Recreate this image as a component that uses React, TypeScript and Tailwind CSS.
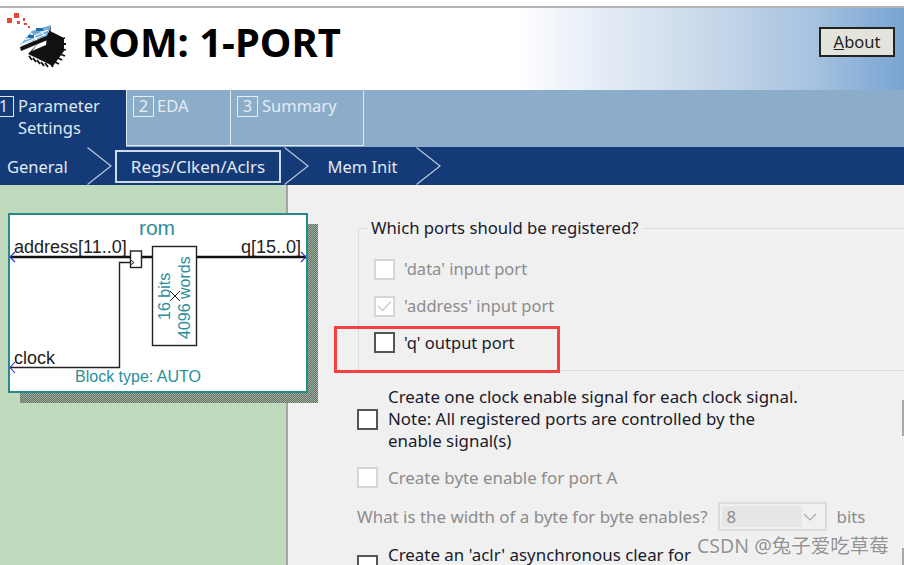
import React from 'react';

const Chevron: React.FC = () => (
  <svg width="25" height="38" viewBox="0 0 25 38" className="shrink-0">
    <path d="M0.5 0.5 L24 19 L0.5 37.5" fill="none" stroke="#b9c8dc" strokeWidth="1.2" />
  </svg>
);

const ChipLogo: React.FC = () => (
  <svg width="72" height="70" viewBox="0 0 72 70" className="shrink-0 -translate-y-[6px]">
    <g fill="#e8453c">
      <rect x="7" y="17" width="5" height="5" />
      <rect x="14" y="12" width="5" height="5" />
      <rect x="17" y="20" width="3" height="3" />
      <rect x="23" y="17" width="2" height="3" />
      <rect x="24" y="22" width="3" height="2" />
      <rect x="28" y="25" width="2" height="2" />
    </g>
    {/* chip body with pins */}
    <path d="M28 53 L50 30 L64 37 L64 50 L53 65 Z" fill="#111" />
    <path d="M29 55 L32 59 M33 57 L36 61 M37 59 L40 63 M41 61 L44 65 M45 62 L48 66 M50 62 L53 66 M55 61 L59 63 M58 57 L62 59 M60 53 L65 55 M62 48 L66 49 M62 43 L66 43 M61 38 L65 37" stroke="#111" strokeWidth="1.8" />
    {/* notch */}
    <path d="M32 50 L46 44 L47 35 L40 40 Z" fill="#fff" />
    {/* tilted panel */}
    <path d="M20 46 L48 34 L51 24 L50 38 L21 50 Z" fill="#111" />
    <path d="M20 44 L32 30 L51 24 L47 35 Z" fill="#6fa9d6" />
    <path d="M25 39 L48 29 M22 43 L46 33 M31 32 L37 39 M39 27 L44 34" stroke="#fff" strokeWidth="1.2" />
    <rect x="36" y="27" width="7" height="3" fill="#1d6fb0" />
    <rect x="28" y="34" width="6" height="3" fill="#1d6fb0" />
  </svg>
);

const Check: React.FC<{ disabled?: boolean; checked?: boolean }> = ({ disabled, checked }) => (
  <span
    className={`flex w-[21px] h-[21px] shrink-0 items-center justify-center border-2 ${
      disabled ? 'border-[#d6d6d6] bg-white' : 'border-[#555] bg-white'
    }`}
  >
    {checked && (
      <svg width="15" height="12" viewBox="0 0 15 12">
        <path d="M1 6 L5.5 10.5 L14 1.5" fill="none" stroke="#cfcfcf" strokeWidth="1.6" />
      </svg>
    )}
  </span>
);

const TEAL = '#2b8f9a';

const RomDiagram: React.FC = () => (
  <svg width="296" height="176" viewBox="10 215 296 176" className="block">
    <g fontFamily="'Liberation Sans', sans-serif">
      <text x="157" y="235" textAnchor="middle" fontSize="21" fill={TEAL}>rom</text>
      <text x="14" y="253" fontSize="18" fill="#222">address[11..0]</text>
      <text x="241" y="253" fontSize="18" fill="#222">q[15..0]</text>
      <text x="14" y="364" fontSize="18" fill="#222">clock</text>
      <text x="75" y="382" fontSize="16" fill={TEAL}>Block type: AUTO</text>
      <text transform="translate(170 320) rotate(-90)" fontSize="16" fill={TEAL}>16 bits</text>
      <text transform="translate(190 339) rotate(-90)" fontSize="16" fill={TEAL}>4096 words</text>
    </g>
    <path d="M10 257 H130 M141 257 H152 M196 257 H306" stroke="#111" strokeWidth="2.4" fill="none" />
    <path d="M10 367.5 H119.5 V262.5 H130" stroke="#222" strokeWidth="1.4" fill="none" />
    <rect x="130.5" y="251" width="11" height="16.5" fill="#fff" stroke="#222" strokeWidth="1.4" />
    <path d="M130.5 260 L134 262.5 L130.5 265" stroke="#222" fill="none" />
    <rect x="152.5" y="246.5" width="44" height="99" fill="none" stroke="#222" strokeWidth="1.4" />
    <path d="M170 291 L180 301 M180 291 L170 301" stroke="#222" strokeWidth="1" />
    <path d="M15 252 L10 257 L15 262 M15 362 L10 367.5 L15 373 M301 252 L306 257 L301 262" stroke="#2a2ad8" strokeWidth="1.1" fill="none" />
  </svg>
);

const App: React.FC = () => {
  return (
    <div className="relative w-[904px] h-[565px] overflow-hidden bg-white font-['Noto_Sans',sans-serif] text-[16.5px] text-[#1a1a2a]">
      <div className="h-[6px] bg-white" />

      {/* header */}
      <div className="flex items-center justify-between h-[84px] border-t-2 border-[#b4b4b4] bg-[linear-gradient(90deg,#ffffff_57%,#e6edf6_66%,#c9d9ea_78%,#a6c2e0_90%,#78a4d2_100%)] pr-[9px]">
        <div className="flex items-center -mt-[14px]">
          <ChipLogo />
          <span className="ml-[10px] text-[40px] font-bold text-black leading-none">ROM: 1-PORT</span>
        </div>
        <button className="mb-[14px] w-[76px] h-[30px] border-2 border-[#222] bg-[#e3e3dc] text-[16.5px] text-[#222] leading-none">
          <span className="underline">A</span>bout
        </button>
      </div>

      {/* wizard tabs */}
      <div className="flex h-[57px] bg-[#8badc9] text-[#e4ecf3]">
        <div className="flex w-[126px] bg-[#143a78] pt-[5px] text-[#dfe8f2]">
          <span className="flex -ml-[7px] mt-[1px] w-[21px] h-[21px] items-center justify-center border border-[#dfe8f2] leading-none">1</span>
          <span className="ml-[4px] leading-[22px]">Parameter<br />Settings</span>
        </div>
        <div className="flex w-[105px] h-[56px] border-x border-b border-[#dde7f0] pt-[5px] pl-[6px]">
          <span className="flex mt-[1px] w-[21px] h-[21px] items-center justify-center border border-[#e4ecf3] leading-none">2</span>
          <span className="ml-[3px] leading-[22px]">EDA</span>
        </div>
        <div className="flex w-[133px] h-[56px] border-r border-b border-[#dde7f0] pt-[5px] pl-[6px]">
          <span className="flex mt-[1px] w-[21px] h-[21px] items-center justify-center border border-[#e4ecf3] leading-none">3</span>
          <span className="ml-[4px] leading-[22px]">Summary</span>
        </div>
      </div>

      {/* page nav */}
      <div className="flex items-center h-[38px] bg-[#143a78] text-[#e1e9f3]">
        <span className="w-[87px] pl-[7px] pt-[2px]">General</span>
        <Chevron />
        <span className="flex ml-[3px] w-[166px] h-[33px] items-center justify-center border-2 border-[#cfdbe9] text-[17px] pt-[1px]">Regs/Clken/Aclrs</span>
        <span className="ml-[3px]"><Chevron /></span>
        <span className="w-[107px] pt-[2px] text-center">Mem Init</span>
        <Chevron />
      </div>

      {/* body */}
      <div className="flex h-[380px]">
        <div className="relative z-10 w-[288px] shrink-0 border-r-2 border-[#a3a3a3] bg-[#c0dabd] pt-[28px] pl-[8px]">
          <div className="relative w-[300px] h-[180px]">
            <div className="absolute left-[12px] top-[11px] w-[298px] h-[179px] bg-[#7c8c7e] bg-[repeating-conic-gradient(#5f7161_0_25%,#a2b0a3_0_50%)] bg-[length:2px_2px]" />
            <div className="relative w-[300px] h-[180px] border-2 border-[#2a8a8a] bg-white">
              <RomDiagram />
            </div>
          </div>
        </div>

        <div className="relative flex-1 bg-[#f0f0f0] pt-[33px] overflow-hidden">
          <fieldset className="ml-[70px] w-[560px] h-[153px] border border-[#dcdcdc] pl-[15px]">
            <legend className="ml-[-7px] px-[4px] leading-[20px] text-[16.7px]">Which ports should be registered?</legend>
            <div className="flex flex-col gap-[12px] pt-[19px]">
              <label className="flex items-center gap-[9px] text-[#8c8c8c]"><Check disabled />'data' input port</label>
              <label className="flex items-center gap-[9px] text-[#8c8c8c]"><Check disabled checked />'address' input port</label>
              <label className="flex items-center gap-[9px]"><Check />'q' output port</label>
            </div>
          </fieldset>

          <div className="pl-[69px] pt-[15px] text-[16.9px]">
            <div className="flex items-center gap-[10px]">
              <Check />
              <span className="leading-[22px]">Create one clock enable signal for each clock signal.<br />Note: All registered ports are controlled by the<br />enable signal(s)</span>
            </div>
            <div className="flex items-center gap-[10px] mt-[13px] text-[#8c8c8c]">
              <Check disabled />
              Create byte enable for port A
            </div>
            <div className="flex items-center mt-[12px] text-[#8c8c8c]">
              <span>What is the width of a byte for byte enables?</span>
              <div className="flex items-center justify-between ml-[10px] w-[109px] h-[29px] border-2 border-[#dcdcdc] bg-[#f0f0f0] pr-[8px]">
                <span className="flex items-center w-[80px] h-[21px] ml-[2px] pl-[5px] bg-[#e6e6e6]">8</span>
                <svg width="14" height="8" viewBox="0 0 14 8"><path d="M1 1 L7 7 L13 1" fill="none" stroke="#a8a8a8" strokeWidth="1.2" /></svg>
              </div>
              <span className="ml-[10px]">bits</span>
            </div>
            <div className="flex items-start gap-[10px] mt-[14px]">
              <span className="mt-[10px]"><Check /></span>
              <span className="leading-[20px]">Create an 'aclr' asynchronous clear for</span>
            </div>
          </div>

          <div className="absolute right-0 top-[215px] w-[2px] h-[36px] bg-[#a9a9a9]" />
          <div className="absolute right-0 top-[363px] w-[2px] h-[17px] bg-[#a9a9a9]" />
        </div>
      </div>

      {/* annotation over the screenshot */}
      <div className="absolute z-20 left-[334px] top-[326px] w-[226px] h-[47px] border-[3px] border-[#f44040]" />
      <span className="absolute z-20 left-[697px] top-[533px] text-[19.5px] leading-[26px] text-[#939393] [text-shadow:0_0_2px_#ffffff] font-['Noto_Sans','Noto_Sans_CJK_SC',sans-serif]">CSDN @兔子爱吃草莓</span>
    </div>
  );
};

export default App;
